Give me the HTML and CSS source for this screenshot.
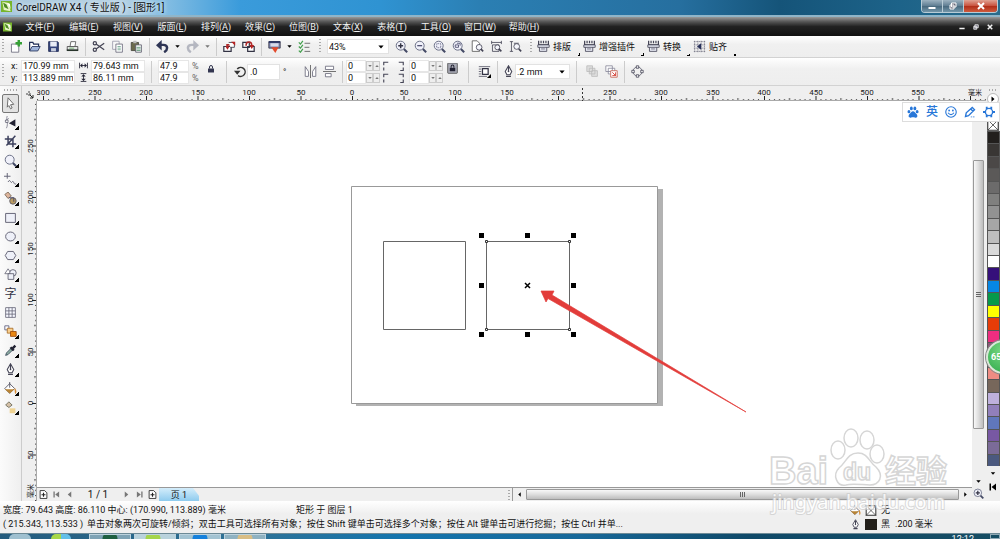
FILE: index.html
```html
<!DOCTYPE html>
<html lang="zh-CN">
<head>
<meta charset="utf-8">
<meta name="viewport" content="width=device-width, initial-scale=1">
<title>CorelDRAW X4 - [图形1]</title>
<link rel="stylesheet" href="styles.css">
</head>
<body>
<svg class="sprite" aria-hidden="true">
  <defs>
    <symbol id="new" viewBox="0 0 16 16"><path d="M3 5h8l1 2v8H3z" fill="#fff" stroke="#667"/><path d="M12 0v8M8 4h8" stroke="#35a035" stroke-width="3"/></symbol>
    <symbol id="open" viewBox="0 0 16 16"><path d="M2 13V3h4l1 2h6v3" fill="#fff" stroke="#1f2c55" stroke-width="1.500"/><path d="M2 13.500 5 8h10l-3 5.500z" fill="#9fb4da" stroke="#1f2c55"/></symbol>
    <symbol id="save" viewBox="0 0 16 16"><path d="M2 2h11l1 1v11H2z" fill="#34447c" stroke="#1d2751"/><path d="M4 2h8v6H4z" fill="#e8ecf6"/><path d="M5 10h6v4H5z" fill="#c9cfdf"/></symbol>
    <symbol id="print" viewBox="0 0 16 16"><path d="m5 8 1-6h6l-1 6" fill="#fff" stroke="#555"/><path d="M1.500 8h13v5h-13z" fill="#e5e5e5" stroke="#444"/><path d="M1 12.500h14" stroke="#26332a" stroke-width="2"/><path d="M4 10h6" stroke="#5da65e"/></symbol>
    <symbol id="cut" viewBox="0 0 16 16"><path d="m5 5 10 7M5 11l10-7" stroke="#445" stroke-width="1.500"/><circle cx="3.500" cy="4" r="2" fill="none" stroke="#445" stroke-width="1.500"/><circle cx="3.500" cy="12" r="2" fill="none" stroke="#445" stroke-width="1.500"/></symbol>
    <symbol id="copy" viewBox="0 0 16 16"><path d="M2 1.500h8v10H2z" fill="#f8f8f8" stroke="#99a"/><path d="M6 5h8v10H6z" fill="#fff" stroke="#667"/><path d="M8 8h4M8 10h4M8 12h4" stroke="#6aa48a"/></symbol>
    <symbol id="paste" viewBox="0 0 16 16"><path d="M1.500 3h9v10h-9z" fill="#6b6a4d" stroke="#44443a"/><path d="M4 1h4v3H4z" fill="#bbb"/><path d="M7 6h7v9H7z" fill="#fff" stroke="#556"/><path d="M8 9h5M8 11h5M8 13h5" stroke="#4d8a67"/></symbol>
    <symbol id="undo" viewBox="0 0 16 16"><path d="M4 6h5c6 0 6 6 1 9" fill="none" stroke="#2e3555" stroke-width="3"/><path d="M0 6.500 7 0v13z" fill="#2e3555"/></symbol>
    <symbol id="import" viewBox="0 0 16 16"><path d="M1 8h9v6H1z" fill="#fff" stroke="#334" stroke-width="1.500"/><path d="M5 9V6h6" stroke="#b02a2a" stroke-width="2" fill="none"/><path d="M7 3h7v6h-5" fill="#fff" stroke="#334"/><path d="m3 8 2.500 4L8 8zM10 2h5v5z" fill="#b52222"/></symbol>
    <symbol id="export" viewBox="0 0 16 16"><path d="M7 8h8v6H7zM1 3h8v6H1z" fill="#fff" stroke="#334" stroke-width="1.500"/><path d="M5 7c0-6 7-6 7 0" fill="none" stroke="#b02a2a" stroke-width="2"/><path d="m9 6 3 5 3-5z" fill="#b52222"/></symbol>
    <symbol id="launch" viewBox="0 0 16 16"><path d="M1 2h14v8H1z" fill="#7b84ac" stroke="#334"/><path d="M3 4h10v4H3z" fill="#d7daea"/><path d="M1 2.500h14" stroke="#263060" stroke-width="2"/><path d="m4 9h9l-4 7z" fill="#e34a2c"/></symbol>
    <symbol id="options" viewBox="0 0 16 16"><path d="m1 3 2 2 3-4M1 8l2 2 3-4M1 13l2 2 3-4" fill="none" stroke="#44a04e" stroke-width="1.500"/><path d="M8 4h7M8 9h6M8 14h7" stroke="#555"/></symbol>
    <symbol id="lens" viewBox="0 0 16 16"><circle cx="7" cy="7" r="5.500" fill="#f0f1fa" stroke="#6a6f86" stroke-width="1.200"/><path d="m11 11 4 4" stroke="#444a66" stroke-width="2.500"/></symbol>
    <symbol id="zin" viewBox="0 0 16 16"><use href="#lens"/><path d="M7 4v6M4 7h6" stroke="#334" stroke-width="1.800"/></symbol>
    <symbol id="zout" viewBox="0 0 16 16"><use href="#lens"/><path d="M4 7h6" stroke="#446" stroke-width="1.500"/></symbol>
    <symbol id="zsel" viewBox="0 0 16 16"><use href="#lens"/><path d="M4.500 4.500h5v5h-5z" fill="none" stroke="#446" stroke-dasharray="1 1"/></symbol>
    <symbol id="zall" viewBox="0 0 16 16"><use href="#lens"/><path d="M4 6h4v3H4zM6 4h4v3" fill="none" stroke="#446"/></symbol>
    <symbol id="zpage" viewBox="0 0 16 16"><path d="M1.500 14V1h6l3 3v10z" fill="#fff" stroke="#555"/><circle cx="10" cy="9" r="3.500" fill="#f5f6fc" stroke="#445"/><path d="m12 11 3 3" stroke="#445" stroke-width="2"/></symbol>
    <symbol id="zwide" viewBox="0 0 16 16"><path d="M2 1v4M14 1v4M2 3h12M3 6h8v8H3z" fill="none" stroke="#445"/><circle cx="9" cy="9" r="3" fill="#f5f6fc" stroke="#445"/><path d="m11 11 3 3" stroke="#445" stroke-width="2"/></symbol>
    <symbol id="zhigh" viewBox="0 0 16 16"><path d="M1 2h4M1 14h4M3 2v12M6 4h6" fill="none" stroke="#445"/><circle cx="9.500" cy="8" r="3.500" fill="#f5f6fc" stroke="#445"/><path d="m12 11 3 3" stroke="#445" stroke-width="2"/></symbol>
    <symbol id="plugin" viewBox="0 0 16 16"><path d="M2 1v5h12V1M5 1v3M8 1v3M11 1v3" fill="none" stroke="#445" stroke-width="1.500"/><path d="M1 6h14v3H1zM3 9v5h9V9" fill="#e6e8f2" stroke="#445"/><path d="M5 11h5" stroke="#667"/></symbol>
    <symbol id="snap" viewBox="0 0 16 16"><path d="M2 1v14M6 1v14M10 1v14M14 1v14M1 2h14M1 6h14M1 10h14M1 14h14" stroke="#778" stroke-dasharray="2 1"/><path d="m5 8 5-4v8z" fill="#27305a"/></symbol>
    <symbol id="lock" viewBox="0 0 16 16"><path d="M5 7V4a3 3 0 0 1 6 0v3" fill="none" stroke="#333650" stroke-width="2"/><path d="M2 7h12v8H2z" fill="#333650"/></symbol>
    <symbol id="lockon" viewBox="0 0 16 16"><rect x="1" y="0" width="14" height="15" rx="1" fill="#a9abb6" stroke="#333"/><path d="M6 7V5a2 2 0 0 1 4 0v2" fill="none" stroke="#223" stroke-width="1.500"/><path d="M4 7h8v5H4z" fill="#223"/></symbol>
    <symbol id="wide" viewBox="0 0 16 16"><path d="M1 3v10M15 3v10M3 8h10" stroke="#223" stroke-width="1.500"/><path d="m2 8 4-4v8zM14 8l-4-4v8z" fill="#223"/></symbol>
    <symbol id="high" viewBox="0 0 16 16"><path d="M3 1h10M3 15h10M8 3v10" stroke="#223" stroke-width="1.500"/><path d="m8 2 4 4H4zM8 14l4-4H4z" fill="#223"/></symbol>
    <symbol id="rotate" viewBox="0 0 16 16"><path d="M4 5a5.500 5.500 0 1 1 1 8" fill="none" stroke="#333" stroke-width="1.800"/><path d="M0 7h8L4 12z" fill="#333"/></symbol>
    <symbol id="mirrorh" viewBox="0 0 16 16"><path d="M8 0v16" stroke="#555"/><path d="M1.500 2v12h4V8zM14.500 2v12h-4V8z" fill="#fff" stroke="#667"/></symbol>
    <symbol id="mirrorv" viewBox="0 0 16 16"><path d="M0 8h16" stroke="#555"/><path d="M3 1.500h10v4H3zM3 10.500h7v4H3z" fill="#fff" stroke="#667"/></symbol>
    <symbol id="wrap" viewBox="0 0 16 16"><path d="M1 2h14M1 5h3M1 8h3M1 11h3M1 14h10" stroke="#556"/><path d="M5.500 4.500h7v7h-7z" fill="#fff" stroke="#334" stroke-width="1.500"/><path d="M16 11v5h-5z"/></symbol>
    <symbol id="pen" viewBox="0 0 16 16"><path d="m8 1 4 7-2 4H6L4 8z" fill="#fff" stroke="#445" stroke-width="1.300"/><path d="M8 2v6M5 14h6" stroke="#445" stroke-width="1.500"/><circle cx="8" cy="8" r="1" fill="#445"/></symbol>
    <symbol id="front" viewBox="0 0 16 16"><path d="M1 1h7v7H1zM4 4h7v7H4zM7 7h7v7H7z" fill="#ddd" stroke="#bbb"/></symbol>
    <symbol id="back" viewBox="0 0 16 16"><path d="M1 1h8v7H1zM4 4h8v7H4z" fill="#fff" stroke="#889"/><path d="M7 7h8v8H7z" fill="#fff" stroke="#c45b4c"/><path d="m9 9 4 4m0-4v4H9" stroke="#d22b1f" fill="none"/></symbol>
    <symbol id="curves" viewBox="0 0 16 16"><circle cx="8" cy="8" r="5.500" fill="none" stroke="#556"/><path d="M6.500 1h3v3h-3zM6.500 12h3v3h-3zM1 6.500h3v3H1zM12 6.500h3v3h-3z" fill="#fff" stroke="#445"/></symbol>
    <symbol id="corner" viewBox="0 0 16 16"><path d="M11 3H5v4M5 10v4" stroke="#445" stroke-width="1.500" fill="none"/></symbol>
    <symbol id="cornerr" viewBox="0 0 16 16"><path d="M5 3h6v4M11 10v4H7" stroke="#445" stroke-width="1.500" fill="none"/></symbol>
    <symbol id="pick" viewBox="0 0 16 16"><path d="m5 1 7 8-4 .5 2 4-2 1-2-4-2 2z" fill="#fff" stroke="#555"/></symbol>
    <symbol id="shape" viewBox="0 0 16 16"><path d="M4 0c-2 4 2 9-1 15M1 6l5-3" fill="none" stroke="#778"/><path d="m6 9 8-5v9z" fill="#223"/><path d="M2 5h3v3H2z" fill="#fff" stroke="#667"/></symbol>
    <symbol id="crop" viewBox="0 0 16 16"><path d="M5 1v10h10M1 5h10v10M3 13 14 1" fill="none" stroke="#3b3f5c" stroke-width="1.800"/></symbol>
    <symbol id="free" viewBox="0 0 16 16"><path d="M4 0v7M0 4h8M5 11c3-5 3 3 5 0s2 5 5 2" fill="none" stroke="#667" stroke-width="1.200"/></symbol>
    <symbol id="smart" viewBox="0 0 16 16"><path d="m1 3 4-3 4 5-4 3z" fill="#ddb49b" stroke="#765"/><circle cx="11" cy="11" r="4" fill="#b99b62" stroke="#556"/><path d="M6 7h6v5" stroke="#446" fill="none"/></symbol>
    <symbol id="rect" viewBox="0 0 16 16"><path d="M2 3h12v11H2z" fill="#eef0f8" stroke="#667" stroke-width="1.200"/></symbol>
    <symbol id="ellipse" viewBox="0 0 16 16"><ellipse cx="8" cy="8" rx="6" ry="5.500" fill="#eef0f8" stroke="#667" stroke-width="1.200"/></symbol>
    <symbol id="poly" viewBox="0 0 16 16"><path d="m4.500 3h7l3 5-3 5h-7l-3-5z" fill="#eef0f8" stroke="#667" stroke-width="1.200"/></symbol>
    <symbol id="basic" viewBox="0 0 16 16"><path d="m5 1 4 6H1z" fill="#fff" stroke="#667"/><circle cx="11" cy="6" r="4" fill="#eef0f8" stroke="#556"/><path d="M5 7h7v7H5z" fill="#eef0f8" stroke="#556"/></symbol>
    <symbol id="table" viewBox="0 0 16 16"><path d="M2 2h12v12H2zM6 2v12M10 2v12M2 6h12M2 10h12" fill="#f7f8ff" stroke="#667"/></symbol>
    <symbol id="blend" viewBox="0 0 16 16"><path d="M1 1h5v5H1z" fill="#fff" stroke="#557"/><path d="M4 4h7v6H4z" fill="#f8cf8f" stroke="#a66a22"/><path d="M8 8h7v6H8z" fill="#e98712" stroke="#99480a"/></symbol>
    <symbol id="dropper" viewBox="0 0 16 16"><path d="m2 14 1-3 6-6 2 2-6 6z" fill="#8aaca0" stroke="#345"/><path d="m8 4 4 4M10 6l4-4" stroke="#223" stroke-width="3"/></symbol>
    <symbol id="bucket" viewBox="0 0 16 16"><path d="m1 8 6-6 6 6-6 6z" fill="#fff" stroke="#445"/><path d="m1 9h12l-6 5z" fill="#b98435"/><path d="M7 0v7" fill="none" stroke="#445"/><path d="M13 7q4 4 1 8-1-2-1-8" fill="#d48b35"/></symbol>
    <symbol id="ifill" viewBox="0 0 16 16"><path d="m2 5 4-4 4 4-4 3z" fill="#d5c0a7" stroke="#665"/><path d="M7 9h7v6H7z" fill="#efd393"/></symbol>
    <symbol id="down" viewBox="0 0 16 16"><path d="M1 4h14l-7 8z"/></symbol>
    <symbol id="left" viewBox="0 0 16 16"><path d="M12 1v14L4 8z"/></symbol>
    <symbol id="right" viewBox="0 0 16 16"><path d="M4 1v14l8-7z"/></symbol>
    <symbol id="first" viewBox="0 0 16 16"><path d="M1 1h3v14H1zM14 1v14L5 8z"/></symbol>
    <symbol id="last" viewBox="0 0 16 16"><path d="M12 1h3v14h-3zM2 1v14l9-7z"/></symbol>
    <symbol id="page" viewBox="0 0 16 16"><path d="M2 1h8l4 4v10H2z" fill="#fff" stroke="#222" stroke-width="1.500"/><path d="M8 5v7M4.500 8.500h7" stroke="#222" stroke-width="2"/></symbol>
    <symbol id="none" viewBox="0 0 16 16"><path d="M1 1h14v14H1z" fill="#fff" stroke="#333" stroke-width="1.500"/><path d="m1 1 14 14M15 1 1 15" stroke="#333"/></symbol>
    <symbol id="paw" viewBox="0 0 16 16"><ellipse cx="2.600" cy="7.500" rx="1.900" ry="2.300"/><ellipse cx="5.800" cy="3.200" rx="1.900" ry="2.500"/><ellipse cx="10.500" cy="3.200" rx="1.900" ry="2.500"/><ellipse cx="13.500" cy="7.500" rx="1.900" ry="2.300"/><path d="M8 7c2 0 3 2 5 4 2 3 0 5-2 4.500-2-.5-4-.5-6 0C3 16 1 14 3 11c2-2 3-4 5-4z"/></symbol>
    <symbol id="smile" viewBox="0 0 16 16"><circle cx="8" cy="8" r="7" fill="none" stroke="currentColor" stroke-width="1.500"/><circle cx="5.500" cy="6" r="1.200"/><circle cx="10.500" cy="6" r="1.200"/><path d="M4 9q4 5 8 0" fill="none" stroke="currentColor" stroke-width="1.500"/></symbol>
    <symbol id="pencil" viewBox="0 0 16 16"><path d="m2 14 1-5 8-7 3 3-8 8zM9 4l3 3" fill="none" stroke="currentColor" stroke-width="1.800"/><path d="M9 14.500h6" stroke="currentColor" stroke-dasharray="2 1"/></symbol>
    <symbol id="gear" viewBox="0 0 16 16"><path d="M5 1v3M11 1v3M5 12v3M11 12v3M0 8h3M13 8h3" stroke="currentColor" stroke-width="2.500"/><circle cx="8" cy="8" r="4.800" fill="none" stroke="currentColor" stroke-width="1.800"/></symbol>
    <symbol id="logo" viewBox="0 0 16 16"><path d="M0 0h16v16H0z" fill="#77b52b"/><path d="M2 1 11 3l3 12-10-2z" fill="#e7f4c5"/><path d="m3 2 5 3 3 7-6-3z" fill="#4b8a22"/><path d="m9 3 4 1 1 8z" fill="#fff"/></symbol>
    <symbol id="restore" viewBox="0 0 16 16"><path d="M5 2h9v8H5zM2 6h8v8H2z" fill="#667" stroke="#fff" stroke-width="2"/></symbol>
    <symbol id="cross" viewBox="0 0 16 16"><path d="m2 2 12 12M14 2 2 14" stroke="currentColor" stroke-width="4"/></symbol>
    <symbol id="minus" viewBox="0 0 16 16"><path d="M1 12h14" stroke="currentColor" stroke-width="4"/></symbol>
  </defs>
</svg>

<div class="app">
  <header class="titlebar">
    <svg class="icon"><use href="#logo"/></svg>
    <h1 class="title">CorelDRAW X4 ( 专业版 ) - [图形1]</h1>
    <div class="window-buttons">
      <button class="win" aria-label="最小化"><svg><use href="#minus"/></svg></button>
      <button class="win" aria-label="还原"><svg><use href="#restore"/></svg></button>
      <button class="win close" aria-label="关闭"><svg><use href="#cross"/></svg></button>
    </div>
  </header>

  <nav class="menubar">
    <svg class="icon doc"><use href="#logo"/></svg>
    <button>文件(<u>F</u>)</button><button>编辑(<u>E</u>)</button><button>视图(<u>V</u>)</button><button>版面(<u>L</u>)</button><button>排列(<u>A</u>)</button><button>效果(<u>C</u>)</button><button>位图(<u>B</u>)</button><button>文本(<u>X</u>)</button><button>表格(<u>T</u>)</button><button>工具(<u>O</u>)</button><button>窗口(<u>W</u>)</button><button>帮助(<u>H</u>)</button>
    <div class="doc-buttons">
      <button aria-label="最小化文档"><svg><use href="#minus"/></svg></button>
      <button aria-label="还原文档"><svg><use href="#restore"/></svg></button>
      <button aria-label="关闭文档"><svg><use href="#cross"/></svg></button>
    </div>
  </nav>

  <div class="toolbar">
    <i class="grip"></i>
    <button class="tool" aria-label="新建"><svg><use href="#new"/></svg></button>
    <button class="tool" aria-label="打开"><svg><use href="#open"/></svg></button>
    <button class="tool" aria-label="保存"><svg><use href="#save"/></svg></button>
    <button class="tool" aria-label="打印"><svg><use href="#print"/></svg></button>
    <i class="sep"></i>
    <button class="tool" aria-label="剪切"><svg><use href="#cut"/></svg></button>
    <button class="tool" aria-label="复制"><svg><use href="#copy"/></svg></button>
    <button class="tool" aria-label="粘贴"><svg><use href="#paste"/></svg></button>
    <i class="sep"></i>
    <button class="tool" aria-label="撤销"><svg><use href="#undo"/></svg></button>
    <button class="drop" aria-label="撤销列表"><svg><use href="#down"/></svg></button>
    <button class="tool redo" aria-label="重做"><svg><use href="#undo"/></svg></button>
    <button class="drop off" aria-label="重做列表"><svg><use href="#down"/></svg></button>
    <i class="sep"></i>
    <button class="tool" aria-label="导入"><svg><use href="#import"/></svg></button>
    <button class="tool" aria-label="导出"><svg><use href="#export"/></svg></button>
    <i class="sep"></i>
    <button class="tool" aria-label="应用程序启动器"><svg><use href="#launch"/></svg></button>
    <button class="drop" aria-label="启动器列表"><svg><use href="#down"/></svg></button>
    <button class="tool" aria-label="选项"><svg><use href="#options"/></svg></button>
    <i class="grip mid"></i>
    <div class="combo zoom"><select aria-label="缩放级别"><option>43%</option></select><svg><use href="#down"/></svg></div>
    <button class="tool" aria-label="放大"><svg><use href="#zin"/></svg></button>
    <button class="tool" aria-label="缩小"><svg><use href="#zout"/></svg></button>
    <button class="tool" aria-label="缩放选定范围"><svg><use href="#zsel"/></svg></button>
    <button class="tool" aria-label="缩放全部对象"><svg><use href="#zall"/></svg></button>
    <button class="tool" aria-label="显示页面"><svg><use href="#zpage"/></svg></button>
    <button class="tool" aria-label="按页宽显示"><svg><use href="#zwide"/></svg></button>
    <button class="tool" aria-label="按页高显示"><svg><use href="#zhigh"/></svg></button>
    <i class="grip mid"></i>
    <button class="plugin"><svg><use href="#plugin"/></svg>排版</button>
    <button class="plugin"><svg><use href="#plugin"/></svg>增强插件</button>
    <button class="plugin"><svg><use href="#plugin"/></svg>转换</button>
    <button class="plugin"><svg><use href="#snap"/></svg>贴齐</button>
  </div>

  <div class="propbar">
    <i class="grip"></i>
    <div class="fields pos">
      <label for="px">x:</label><input id="px" value="170.99 mm">
      <label for="py">y:</label><input id="py" value="113.889 mm">
    </div>
    <div class="fields size">
      <label for="pw"><svg role="img" aria-label="宽度"><use href="#wide"/></svg></label><input id="pw" value="79.643 mm">
      <label for="ph"><svg role="img" aria-label="高度"><use href="#high"/></svg></label><input id="ph" value="86.11 mm">
    </div>
    <i class="sep"></i>
    <div class="fields scale">
      <input id="sx" value="47.9" aria-label="水平比例"><span>%</span>
      <input id="sy" value="47.9" aria-label="垂直比例"><span>%</span>
    </div>
    <button class="tool up" aria-label="锁定比例"><svg><use href="#lock"/></svg></button>
    <i class="sep"></i>
    <label class="tool slim" for="angle"><svg role="img" aria-label="旋转角度"><use href="#rotate"/></svg></label>
    <input class="angle" id="angle" value=".0"><span class="degree">°</span>
    <button class="tool" aria-label="水平镜像"><svg><use href="#mirrorh"/></svg></button>
    <button class="tool" aria-label="垂直镜像"><svg><use href="#mirrorv"/></svg></button>
    <i class="sep tight"></i>
    <div class="fields round">
      <input value="0" aria-label="左上圆角"><button aria-label="减"><svg><use href="#down"/></svg></button><button class="inc" aria-label="加"><svg><use href="#down"/></svg></button><svg class="cr"><use href="#corner"/></svg>
      <input value="0" aria-label="左下圆角"><button aria-label="减"><svg><use href="#down"/></svg></button><button class="inc" aria-label="加"><svg><use href="#down"/></svg></button><svg class="cr"><use href="#corner"/></svg>
    </div>
    <div class="fields round right">
      <svg class="cr"><use href="#cornerr"/></svg><input value="0" aria-label="右上圆角"><button aria-label="减"><svg><use href="#down"/></svg></button><button class="inc" aria-label="加"><svg><use href="#down"/></svg></button>
      <svg class="cr"><use href="#cornerr"/></svg><input value="0" aria-label="右下圆角"><button aria-label="减"><svg><use href="#down"/></svg></button><button class="inc" aria-label="加"><svg><use href="#down"/></svg></button>
    </div>
    <button class="tool up" aria-label="全部圆角"><svg><use href="#lockon"/></svg></button>
    <i class="sep"></i>
    <button class="tool" aria-label="段落文本换行"><svg><use href="#wrap"/></svg></button>
    <i class="sep tight"></i>
    <label class="tool slim" for="outline"><svg role="img" aria-label="轮廓宽度"><use href="#pen"/></svg></label>
    <div class="combo"><select id="outline"><option>.2 mm</option></select><svg><use href="#down"/></svg></div>
    <i class="sep"></i>
    <button class="tool" aria-label="到图层前面"><svg><use href="#front"/></svg></button>
    <button class="tool" aria-label="到图层后面"><svg><use href="#back"/></svg></button>
    <i class="sep tight"></i>
    <button class="tool" aria-label="转换为曲线"><svg><use href="#curves"/></svg></button>
  </div>

  <main class="workspace">
    <aside class="toolbox">
      <i class="grip-h"></i>
      <button class="active" aria-label="挑选"><svg><use href="#pick"/></svg></button>
      <button class="fly" aria-label="形状"><svg><use href="#shape"/></svg></button>
      <button class="fly" aria-label="裁剪"><svg><use href="#crop"/></svg></button>
      <button class="fly" aria-label="缩放"><svg><use href="#lens"/></svg></button>
      <button class="fly" aria-label="手绘"><svg><use href="#free"/></svg></button>
      <button class="fly" aria-label="智能填充"><svg><use href="#smart"/></svg></button>
      <button class="fly" aria-label="矩形"><svg><use href="#rect"/></svg></button>
      <button class="fly" aria-label="椭圆形"><svg><use href="#ellipse"/></svg></button>
      <button class="fly" aria-label="多边形"><svg><use href="#poly"/></svg></button>
      <button class="fly" aria-label="基本形状"><svg><use href="#basic"/></svg></button>
      <button class="glyph">字</button>
      <button aria-label="表格"><svg><use href="#table"/></svg></button>
      <button class="fly" aria-label="调和"><svg><use href="#blend"/></svg></button>
      <button class="fly" aria-label="滴管"><svg><use href="#dropper"/></svg></button>
      <button class="fly" aria-label="轮廓"><svg><use href="#pen"/></svg></button>
      <button class="fly" aria-label="填充"><svg><use href="#bucket"/></svg></button>
      <button class="fly" aria-label="交互式填充"><svg><use href="#ifill"/></svg></button>
    </aside>

    <div class="origin">
      <svg viewBox="0 0 15 15"><path d="M7 5v6M4 8h6" stroke="#444" stroke-dasharray="2 1"/><path d="m8 9 3 3m0-3v3H8" stroke="#222" fill="none"/></svg>
    </div>

    <svg class="ruler-h">
      <defs><pattern id="hticks" x="315" y="0" width="51.500" height="15" patternUnits="userSpaceOnUse">
        <path d="M.5 10v5" stroke="#222"/>
        <path d="M5.500 13v2M10.500 13v2M15.500 13v2M20.500 13v2M25.500 12v3M31 13v2M36 13v2M41 13v2M46 13v2" stroke="#444"/>
      </pattern></defs>
      <rect width="100%" height="15" fill="url(#hticks)"/>
      <path d="M0 14.500h2000" stroke="#aaa"/>
      <path d="M545.500 2v13" stroke="#333" stroke-dasharray="2 2"/>
      <g text-anchor="middle">
        <text x="6" y="9">300</text><text x="58" y="9">250</text><text x="109" y="9">200</text><text x="161" y="9">150</text><text x="212" y="9">100</text><text x="264" y="9">50</text><text x="315" y="9">0</text><text x="367" y="9">50</text><text x="418" y="9">100</text><text x="470" y="9">150</text><text x="521" y="9">200</text><text x="573" y="9">250</text><text x="624" y="9">300</text><text x="676" y="9">350</text><text x="727" y="9">400</text><text x="779" y="9">450</text><text x="830" y="9">500</text><text x="881" y="9">550</text><text class="unit" x="938" y="9">毫米</text>
      </g>
    </svg>

    <svg class="ruler-v">
      <defs><pattern id="vticks" x="0" y="302" width="15" height="51.500" patternUnits="userSpaceOnUse">
        <path d="M10 .5h5" stroke="#222"/>
        <path d="M13 5.500h2M13 10.500h2M13 15.500h2M13 20.500h2M12 25.500h3M13 31h2M13 36h2M13 41h2M13 46h2" stroke="#444"/>
      </pattern></defs>
      <rect width="15" height="100%" fill="url(#vticks)"/>
      <path d="M14.500 0v2000" stroke="#aaa"/>
      <g text-anchor="middle">
        <text transform="translate(11 45) rotate(-90)">250</text><text transform="translate(11 96) rotate(-90)">200</text><text transform="translate(11 148) rotate(-90)">150</text><text transform="translate(11 199) rotate(-90)">100</text><text transform="translate(11 251) rotate(-90)">50</text><text transform="translate(11 302) rotate(-90)">0</text><text transform="translate(11 354) rotate(-90)">50</text><text class="unit" transform="translate(11 390) rotate(-90)">毫米</text>
      </g>
    </svg>

    <svg class="canvas" role="img" aria-label="绘图页面">
      <path d="M319 88h307v217H319z" fill="#b2b2b2"/>
      <path d="M314.500 85.500h306v217h-306z" fill="#fff" stroke="#999"/>
      <path d="M346.500 140.500h82v88h-82zM449.500 140.500h83v88h-83z" fill="#fff" stroke="#666"/>
      <path d="M448.500 139.500h2v2h-2zM531.500 139.500h2v2h-2zM448.500 227.500h2v2h-2zM531.500 227.500h2v2h-2z" fill="#fff" stroke="#333"/>
      <path d="M442 132h5v5h-5zM488 132h5v5h-5zM534 132h5v5h-5zM442 182h5v5h-5zM534 182h5v5h-5zM442 231h5v5h-5zM488 231h5v5h-5zM534 231h5v5h-5z"/>
      <path d="m488 182 5 5m0-5-5 5" stroke="#000" stroke-width="1.500"/>
      <path d="m504 190 13 0-2 4L709 311 511 197.500l-2 3.500z" fill="#e23c3a" stroke="#e23c3a" stroke-width=".7"/>
    </svg>

    <div class="scroll-v">
      <i class="thumb"><i class="lines"></i></i>
      <button aria-label="向下滚动"><svg><use href="#down"/></svg></button>
    </div>

    <div class="bottom">
      <div class="pages">
        <button aria-label="添加页"><svg class="pg"><use href="#page"/></svg></button>
        <button class="off" aria-label="首页"><svg><use href="#first"/></svg></button>
        <button class="off" aria-label="上一页"><svg><use href="#left"/></svg></button>
        <span class="count">1 / 1</span>
        <button class="off" aria-label="下一页"><svg><use href="#right"/></svg></button>
        <button class="off" aria-label="末页"><svg><use href="#last"/></svg></button>
        <button aria-label="在后面添加页"><svg class="pg"><use href="#page"/></svg></button>
        <button class="tab">页 1</button>
        <i class="grip"></i>
      </div>
      <div class="scroll-h">
        <button aria-label="向左滚动"><svg><use href="#left"/></svg></button>
        <i class="thumb"><i class="lines"></i></i>
        <button aria-label="向右滚动"><svg><use href="#right"/></svg></button>
      </div>
    </div>
    <button class="navigator" aria-label="导航器"><svg><use href="#zin"/></svg></button>

    <aside class="palette">
      <i class="grip-h"></i>
      <button class="round-arrow" aria-label="调色板菜单"><svg><use href="#right"/></svg></button>
      <button class="no-fill" aria-label="无填充"><svg><use href="#none"/></svg></button>
      <div class="swatches">
        <i class="k100"></i><i class="k90"></i><i class="k80"></i><i class="k70"></i><i class="k60"></i><i class="k50"></i><i class="k40"></i><i class="k30"></i><i class="k20"></i><i class="k10"></i><i class="white"></i><i class="violet"></i><i class="cyan"></i><i class="green"></i><i class="yellow"></i><i class="red"></i><i class="magenta"></i><i class="mauve"></i><i class="rose"></i><i class="salmon"></i><i class="brown"></i><i class="lilac"></i><i class="lavender"></i><i class="azure"></i><i class="purple"></i><i class="plum"></i><i class="slate"></i>
      </div>
      <button class="pal-nav" aria-label="向下"><svg><use href="#down"/></svg></button>
      <button class="pal-nav big" aria-label="展开"><svg><use href="#first"/></svg></button>
    </aside>

    <div class="ime">
      <svg><use href="#paw"/></svg><button>英</button><svg><use href="#smile"/></svg><svg><use href="#pencil"/></svg><svg><use href="#gear"/></svg>
    </div>
    <div class="ball">65</div>

    <svg class="watermark" viewBox="0 0 184 90">
      <g class="mark">
        <text class="bai" x="2" y="57">Bai</text>
        <ellipse cx="71" cy="23" rx="7" ry="9"/><ellipse cx="84" cy="11" rx="7" ry="9"/><ellipse cx="100" cy="13" rx="7" ry="9"/><ellipse cx="110" cy="27" rx="7" ry="9"/>
        <path d="M91 26c10 0 11 9 18 14 9 9 3 18-6 18-7 0-18-2-24 0-9 2-14-10-7-17 7-5 8-15 19-15z"/>
        <text class="du" x="76" y="53">du</text>
        <text class="jy" x="118" y="55">经验</text>
      </g>
      <text class="site" x="5" y="82">jingyan.baidu.com</text>
    </svg>
  </main>

  <footer class="status">
    <div class="line"><span class="measure">宽度: 79.643 高度: 86.110 中心: (170.990, 113.889) 毫米</span><span class="object">矩形 于 图层 1</span><span class="info"><svg><use href="#bucket"/></svg><svg class="box"><use href="#none"/></svg>无</span></div>
    <div class="line"><span class="coords">( 215.343, 113.533 )</span><span class="hint">单击对象两次可旋转/倾斜；双击工具可选择所有对象；按住 Shift 键单击可选择多个对象；按住 Alt 键单击可进行挖掘；按住 Ctrl 并单...</span><span class="info"><svg><use href="#pen"/></svg><i class="box black"></i>黑<span class="weight">.200 毫米</span></span></div>
  </footer>

  <div class="taskbar">
    <button class="orb" aria-label="开始"></button>
    <button class="msn" aria-label="联系人"></button>
    <button class="task t1" aria-label="任务 1"></button><button class="task t2" aria-label="任务 2"></button><button class="task t3" aria-label="任务 3"></button><button class="task t4" aria-label="任务 4"></button>
    <time class="clock">12:12</time>
    <button class="desk" aria-label="显示桌面"></button>
  </div>
</div>
</body>
</html>
```
FILE: styles.css
```css
* { box-sizing: border-box; }
body { margin: 0; font: 9px/12px Roboto, "Noto Sans CJK SC", sans-serif; color: #111; }
button, input, select { font: inherit; color: inherit; margin: 0; padding: 0; border: 0; background: none; border-radius: 0; }
button { display: flex; align-items: center; justify-content: center; flex: none; }
svg { display: block; flex: none; }
i { display: block; flex: none; }
.sprite { position: absolute; width: 0; height: 0; }
.app { display: flex; flex-direction: column; height: 100vh; overflow: hidden; background: #efefef; }

.titlebar { display: flex; flex: none; height: 17px; padding-left: 1px; border-bottom: 2px solid #8fb5c9;
  background: linear-gradient(90deg, #a9c8dd 0, #b7d2e4 12%, #7fbbe2 17%, #3a9bdb 24%, #2f93d2 38%, #2b7fb3 48%, #266f9f 68%, #155479 78%, #1d6389 90%, #2a6c8c 100%); }
.titlebar .icon { width: 11px; height: 13px; }
.title { margin: 0 auto 0 4px; font-size: 10px; font-weight: 400; line-height: 15px; white-space: nowrap; text-shadow: 0 0 4px #fff; }
.window-buttons { display: flex; height: 13px; margin-right: 2px; border: 1px solid #b8ccd6; border-top: 0; border-radius: 0 0 4px 4px; overflow: hidden; }
.win { width: 21px; color: #fff; background: linear-gradient(#9db2c0, #5e7c91 50%, #48687d 51%, #7497aa); border-right: 1px solid #b8ccd6; }
.win svg { width: 8px; height: 8px; }
.win.close { width: 33px; border-right: 0; background: linear-gradient(#e0a293, #c8503c 50%, #b02d18 51%, #cf5b3d); }

.menubar { display: flex; flex: none; align-items: center; height: 19px; padding: 0 6px 0 3px; color: #f2f2f2; background: linear-gradient(#999 0, #555 25%, #222 50%, #111 100%); }
.menubar .icon { width: 9px; height: 12px; margin-right: 6px; }
.menubar > button { width: 44px; white-space: nowrap; }
.doc-buttons { display: flex; gap: 5px; margin-left: auto; }
.doc-buttons button { width: 9px; }
.doc-buttons svg { width: 6px; height: 6px; }

.toolbar, .propbar { display: flex; flex: none; align-items: center; border-bottom: 1px solid #d2d2d2; background: linear-gradient(#fff, #f0f0f0 40%, #eee); }
.toolbar { height: 22px; }
.propbar { height: 28px; }
.grip { width: 2px; height: 15px; margin: 0 2px; background: repeating-linear-gradient(#aaa 0 1px, transparent 1px 3px); }
.grip.mid { margin: 0 5px; }
.sep { width: 1px; height: 18px; margin: 0 3px; background: #ccc; }
.propbar .sep { height: 22px; margin: 0 6px; }
.propbar .sep.tight { margin: 0 3px; }
.tool { display: flex; flex: none; align-items: center; justify-content: center; width: 19px; height: 19px; }
.tool svg { width: 13px; height: 13px; }
.tool.slim { width: 14px; }
.tool.up { align-self: flex-start; }
.redo svg { transform: scaleX(-1); opacity: .3; }
.drop { width: 11px; height: 19px; }
.drop svg { width: 5px; height: 5px; }
.off { opacity: .5; }
.combo { display: flex; align-items: center; width: 55px; height: 15px; padding-right: 4px; background: #fff; border: 1px solid #e2e2e2; }
.combo.zoom { width: 62px; margin: 0 3px 0 1px; }
.combo select { flex: 1; min-width: 0; height: 13px; padding-left: 1px; appearance: none; line-height: 12px; outline: 0; }
.combo svg { width: 6px; height: 6px; }
.plugin { position: relative; gap: 3px; padding-right: 9px; height: 20px; margin-right: 3px; white-space: nowrap; }
.plugin svg { width: 13px; height: 13px; }
.plugin::after, .fly::after { content: ""; position: absolute; right: 0; bottom: 1px; width: 3px; height: 3px; background: linear-gradient(135deg, transparent 50%, #000 50%); }

.fields { display: grid; grid-auto-rows: 12px; align-items: center; }
.fields input { width: 100%; min-width: 0; height: 12px; padding: 0 1px; background: #fff; border: 1px solid #e6e6e6; line-height: 10px; }
.fields svg { width: 9px; height: 9px; }
.pos { grid-template-columns: 10px 54px; margin-left: 5px; }
.size { grid-template-columns: 12px 54px; margin-left: 4px; }
.scale { grid-template-columns: 31px 12px; }
.scale span { padding-left: 3px; color: #666; }
.propbar .tool.up { padding-top: 2px; }
.propbar .tool.up svg { width: 11px; height: 11px; }
.propbar .scale + .tool.up svg { width: 8px; height: 8px; }
.angle { width: 33px; height: 16px; padding: 0 2px; background: #fff; border: 1px solid #e2e2e2; }
.degree { width: 21px; padding-left: 3px; }
.round { grid-template-columns: 20px 7px 7px 15px; }
.round.right { grid-template-columns: 14px 20px 7px 7px; }
.round button { height: 10px; border: 1px solid #ccc; background: #eee; }
.round button svg { width: 4px; height: 4px; fill: #777; }
.round .inc svg { transform: rotate(180deg); }
.round .cr { width: 12px; height: 12px; }

.workspace { position: relative; z-index: 1; display: grid; flex: 1; min-height: 0; grid-template: 15px minmax(0, 1fr) 14px / 22px 15px minmax(0, 1fr) 14px 14px; overflow: clip; overflow-clip-margin: 20px; }
.toolbox { grid-area: 1 / 1 / 4 / 2; display: flex; flex-direction: column; align-items: center; padding-top: 3px; border-right: 1px solid #ccc; background: linear-gradient(90deg, #fbfbfb, #efefef); }
.grip-h { width: 14px; height: 2px; margin-bottom: 3px; background: repeating-linear-gradient(90deg, #aaa 0 1px, transparent 1px 3px); }
.toolbox button { position: relative; width: 17px; height: 19px; }
.toolbox svg { width: 13px; height: 13px; }
.toolbox .active { border: 1px solid #777; border-radius: 2px; background: #e2e2e2; }
.toolbox .glyph { font-size: 12px; line-height: 16px; color: #334; }
.toolbox .fly::after { width: 4px; height: 4px; bottom: 2px; }
.origin { grid-area: 1 / 2; }
.origin svg { width: 15px; height: 15px; }
.ruler-h { grid-area: 1 / 3 / 2 / 5; width: 100%; height: 15px; overflow: hidden; }
.ruler-v { grid-area: 2 / 2 / 4 / 3; width: 15px; height: 100%; overflow: hidden; }
.ruler-h text, .ruler-v text { font-size: 8px; fill: #222; }
.workspace .unit { font-size: 7px; }
.canvas { grid-area: 2 / 3; width: 100%; height: 100%; background: #fff; }

.scroll-v { grid-area: 2 / 4; display: flex; flex-direction: column; align-items: center; padding: 59px 2px 0 0; }
.thumb { display: flex; align-items: center; justify-content: center; border: 1px solid #999; border-radius: 1px; }
.scroll-v .thumb { flex: 1; width: 11px; margin-bottom: 46px; background: linear-gradient(90deg, #f8f8f8, #ddd 50%, #bdbdbd); }
.scroll-v .lines { width: 5px; height: 6px; background: repeating-linear-gradient(#666 0 1px, transparent 1px 2px); }
.scroll-v button { height: 12px; }
.scroll-v svg, .scroll-h svg { width: 5px; height: 5px; }
.bottom { grid-area: 3 / 3; display: flex; border-top: 1px solid #999; }
.pages { display: flex; align-items: center; width: 476px; border-right: 1px solid #999; }
.pages button { width: 13px; height: 13px; }
.pages svg { width: 7px; height: 7px; }
.pages .pg { width: 9px; height: 9px; }
.count { width: 44px; text-align: center; font-size: 10px; }
.pages .tab { width: 40px; background: linear-gradient(#d4edfb, #8ecbee); clip-path: polygon(0 0, 85% 0, 100% 60%, 100% 100%, 0 100%); }
.pages .grip { height: 10px; margin-left: auto; }
.scroll-h { display: flex; flex: 1; align-items: center; min-width: 0; }
.scroll-h button { width: 13px; height: 13px; }
.scroll-h .thumb { flex: 1; height: 11px; background: linear-gradient(#f8f8f8, #ddd 50%, #bdbdbd); }
.scroll-h .lines { width: 6px; height: 5px; background: repeating-linear-gradient(90deg, #666 0 1px, transparent 1px 2px); }
.navigator { grid-area: 3 / 4; width: 12px; height: 13px; }
.navigator svg { width: 11px; height: 11px; }

.palette { grid-area: 1 / 5 / 4 / 6; display: flex; flex-direction: column; align-items: center; padding: 3px 0 7px; }
.palette .grip-h { width: 8px; margin-bottom: 2px; }
.round-arrow { width: 12px; height: 12px; border: 1px solid #bbb; border-radius: 6px; background: #fff; }
.round-arrow svg { width: 6px; height: 6px; }
.no-fill { margin-top: 14px; }
.no-fill svg { width: 12px; height: 12px; }
.swatches { display: flex; flex: 1; flex-direction: column; width: 13px; min-height: 0; }
.swatches i { flex: 1; border: solid #555; border-width: 1px 1px 0; }
.k100 { background: #221f1d; } .k90 { background: #393634; } .k80 { background: #4b4847; } .k70 { background: #5b5958; }
.k60 { background: #6c6b6b; } .k50 { background: #80807f; } .k40 { background: #929292; } .k30 { background: #a6a6a6; }
.k20 { background: #bebebe; } .k10 { background: #dadada; } .white { background: #fff; } .violet { background: #35107a; }
.cyan { background: #0787e5; } .green { background: #07994a; } .yellow { background: #ff0; } .red { background: #e73c08; }
.magenta { background: #ed2d80; } .mauve { background: #8d5478; } .rose { background: #d68796; } .salmon { background: #ee8c83; }
.brown { background: #77675b; } .lilac { background: #beb0dc; } .lavender { background: #917fba; } .azure { background: #6077bb; }
.purple { background: #7858a3; } .plum { background: #7b6b98; } .slate { background: #4b597f; }
.pal-nav { height: 14px; }
.pal-nav svg { width: 6px; height: 5px; }
.pal-nav.big svg { width: 8px; height: 8px; }

.ime { position: absolute; top: 16px; right: 0; display: flex; align-items: center; gap: 7px; height: 20px; padding: 0 4px; color: #2877d8; fill: currentColor; background: #fff; border: 1px solid #ddd; }
.ime svg { width: 12px; height: 12px; }
.ime button { width: 12px; font-size: 12px; font-weight: 500; }
.ball { position: absolute; top: 254px; right: -20px; width: 34px; height: 34px; padding-left: 3px; border: 2px solid #d8e8d8; outline: 1px solid #888; border-radius: 50%; background: radial-gradient(circle at 50% 30%, #7ad884, #2faa4b); color: #fff; font-size: 9px; font-weight: 700; line-height: 30px; }
.watermark { position: absolute; right: 49px; bottom: -16px; width: 184px; height: 90px; overflow: visible; pointer-events: none; }
.mark > * { fill: #fff; fill-opacity: .85; stroke: #d6d6d6; stroke-width: 1.5px; }
.bai { font: 700 38px "Liberation Sans", sans-serif; }
.du { font: 700 23px "Liberation Sans", sans-serif; }
.jy { font: 700 31px "Noto Sans CJK SC", sans-serif; }
.site { font: 20px "Noto Sans", sans-serif; fill: #fff; stroke: #ccc; stroke-width: 2px; paint-order: stroke; opacity: .75; }

.status { flex: none; height: 32px; padding: 2px 0 0 3px; background: linear-gradient(#fff, #efefef 40%); }
.line { display: flex; height: 14px; align-items: center; white-space: nowrap; }
.measure { width: 293px; }
.coords { width: 84px; }
.info { display: flex; align-items: center; gap: 4px; width: 150px; margin-left: auto; }
.info svg { width: 11px; height: 11px; }
.info .box { width: 12px; height: 11px; }
.black { background: #221f1a; }
.weight { margin-left: 1px; }

.taskbar { display: flex; flex: none; height: 6px; padding-left: 9px; border-top: 1px solid #6d8a96; overflow: hidden; background: linear-gradient(90deg, #245b7d, #2f7296 25%, #1374ad 40%, #176899 58%, #0f4968 75%, #164d63 100%); }
.taskbar button { height: 5px; }
.orb { width: 22px; border-radius: 11px 11px 0 0; background: #9fc0d0; }
.msn { width: 20px; margin: 0 18px 0 20px; border-radius: 5px 5px 0 0; background: linear-gradient(90deg, #a8d84a 50%, #62bfe8 50%); }
.task { width: 42px; margin-right: 3px; border: 1px solid #bdd3de; border-bottom: 0; }
.t1 { background: radial-gradient(circle at 50% 100%, #1e5f41 0 7px, #7fa3b5 8px); }
.t2 { background: radial-gradient(circle at 45% 100%, #a5d54c 0 7px, #b9d2dc 8px); }
.t3 { background: radial-gradient(circle at 50% 100%, #1681dc 0 7px, #a3c3d2 8px); }
.t4 { background: radial-gradient(circle at 50% 100%, #d8bd85 0 7px, #8fb2c2 8px); }
.clock { margin: 0 16px 0 auto; color: #fff; line-height: 10px; }
.taskbar .desk { width: 10px; border: 1px solid #8fa9b5; }
```
